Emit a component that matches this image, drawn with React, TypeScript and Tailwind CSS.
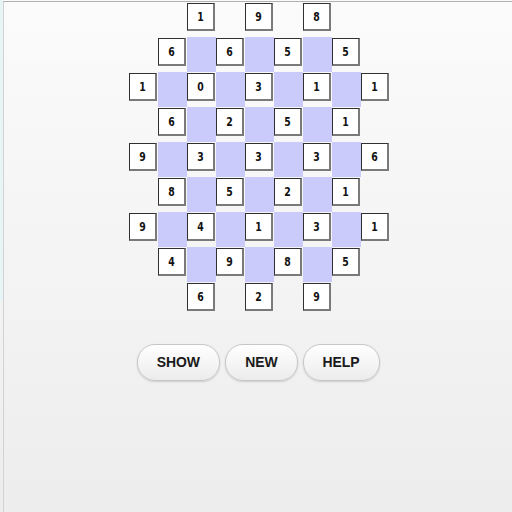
import React from 'react';

// numbers on the white tiles, row by row (only tile cells)
const rows: number[][] = [
  [1, 9, 8],
  [6, 6, 5, 5],
  [1, 0, 3, 1, 1],
  [6, 2, 5, 1],
  [9, 3, 3, 3, 6],
  [8, 5, 2, 1],
  [9, 4, 1, 3, 1],
  [4, 9, 8, 5],
  [6, 2, 9],
];

const reach = [2, 3, 4, 4, 4, 4, 4, 3, 2];

const Tile: React.FC<{ value: number }> = ({ value }) => (
  <div className="w-[28px] h-[28px] mt-[1px] bg-white border-t border-l border-r-2 border-b-2 border-t-[#303030] border-l-[#303030] border-r-[#7a7a7a] border-b-[#7a7a7a] flex items-center justify-center">
    <span
      className="inline-block text-[13px] font-bold text-[#111] leading-none scale-x-[0.72]"
      style={{ fontFamily: '"DejaVu Sans", "Liberation Sans", sans-serif' }}
    >
      {value}
    </span>
  </div>
);

const Board: React.FC = () => {
  const cells: React.ReactNode[] = [];
  rows.forEach((nums, r) => {
    let k = 0;
    for (let c = 0; c < 9; c++) {
      const isTile = (r + c) % 2 === 0 && Math.abs(c - 4) <= reach[r];
      const isShade = (r + c) % 2 === 1 && r >= 1 && r <= 7 && c >= 1 && c <= 7;
      if (isTile) {
        cells.push(
          <div key={`${r}-${c}`} className="w-[29px] h-[35px]">
            <Tile value={nums[k++]} />
          </div>
        );
      } else if (isShade) {
        cells.push(<div key={`${r}-${c}`} className="w-[29px] h-[35px] bg-[#cacafb]" />);
      } else {
        cells.push(<div key={`${r}-${c}`} className="w-[29px] h-[35px]" />);
      }
    }
  });
  return <div className="grid grid-cols-[repeat(9,29px)] grid-rows-[repeat(9,35px)]">{cells}</div>;
};

const Btn: React.FC<{ label: string; w: string }> = ({ label, w }) => (
  <button
    className={`${w} h-[37px] rounded-[18px] border border-[#c6c6c6] bg-gradient-to-b from-white to-[#ececec] shadow-[0_1px_2px_rgba(0,0,0,0.15)] text-[15px] font-bold text-[#1a1a1a]`}
    style={{ fontFamily: '"Liberation Sans", Arial, sans-serif' }}
  >
    <span className="inline-block scale-x-[0.93]">{label}</span>
  </button>
);

const App: React.FC = () => {
  return (
    <div className="w-[512px] h-[512px] relative overflow-hidden bg-gradient-to-b from-[#fbfbfb] to-[#ededed]">
      <div className="absolute left-0 top-0 w-[3px] h-[300px] bg-[#e6f6f6]" />
      <div className="h-full border-t border-t-[#b0b0b0] border-l border-l-[#d2d2d2] ml-[3px] mt-[1px] flex flex-col items-center">
        <div className="pl-[3px]">
          <Board />
        </div>
        <div className="mt-[27px] flex gap-[5px] pl-[1px]">
          <Btn label="SHOW" w="w-[83px]" />
          <Btn label="NEW" w="w-[73px]" />
          <Btn label="HELP" w="w-[77px]" />
        </div>
      </div>
    </div>
  );
};

export default App;
